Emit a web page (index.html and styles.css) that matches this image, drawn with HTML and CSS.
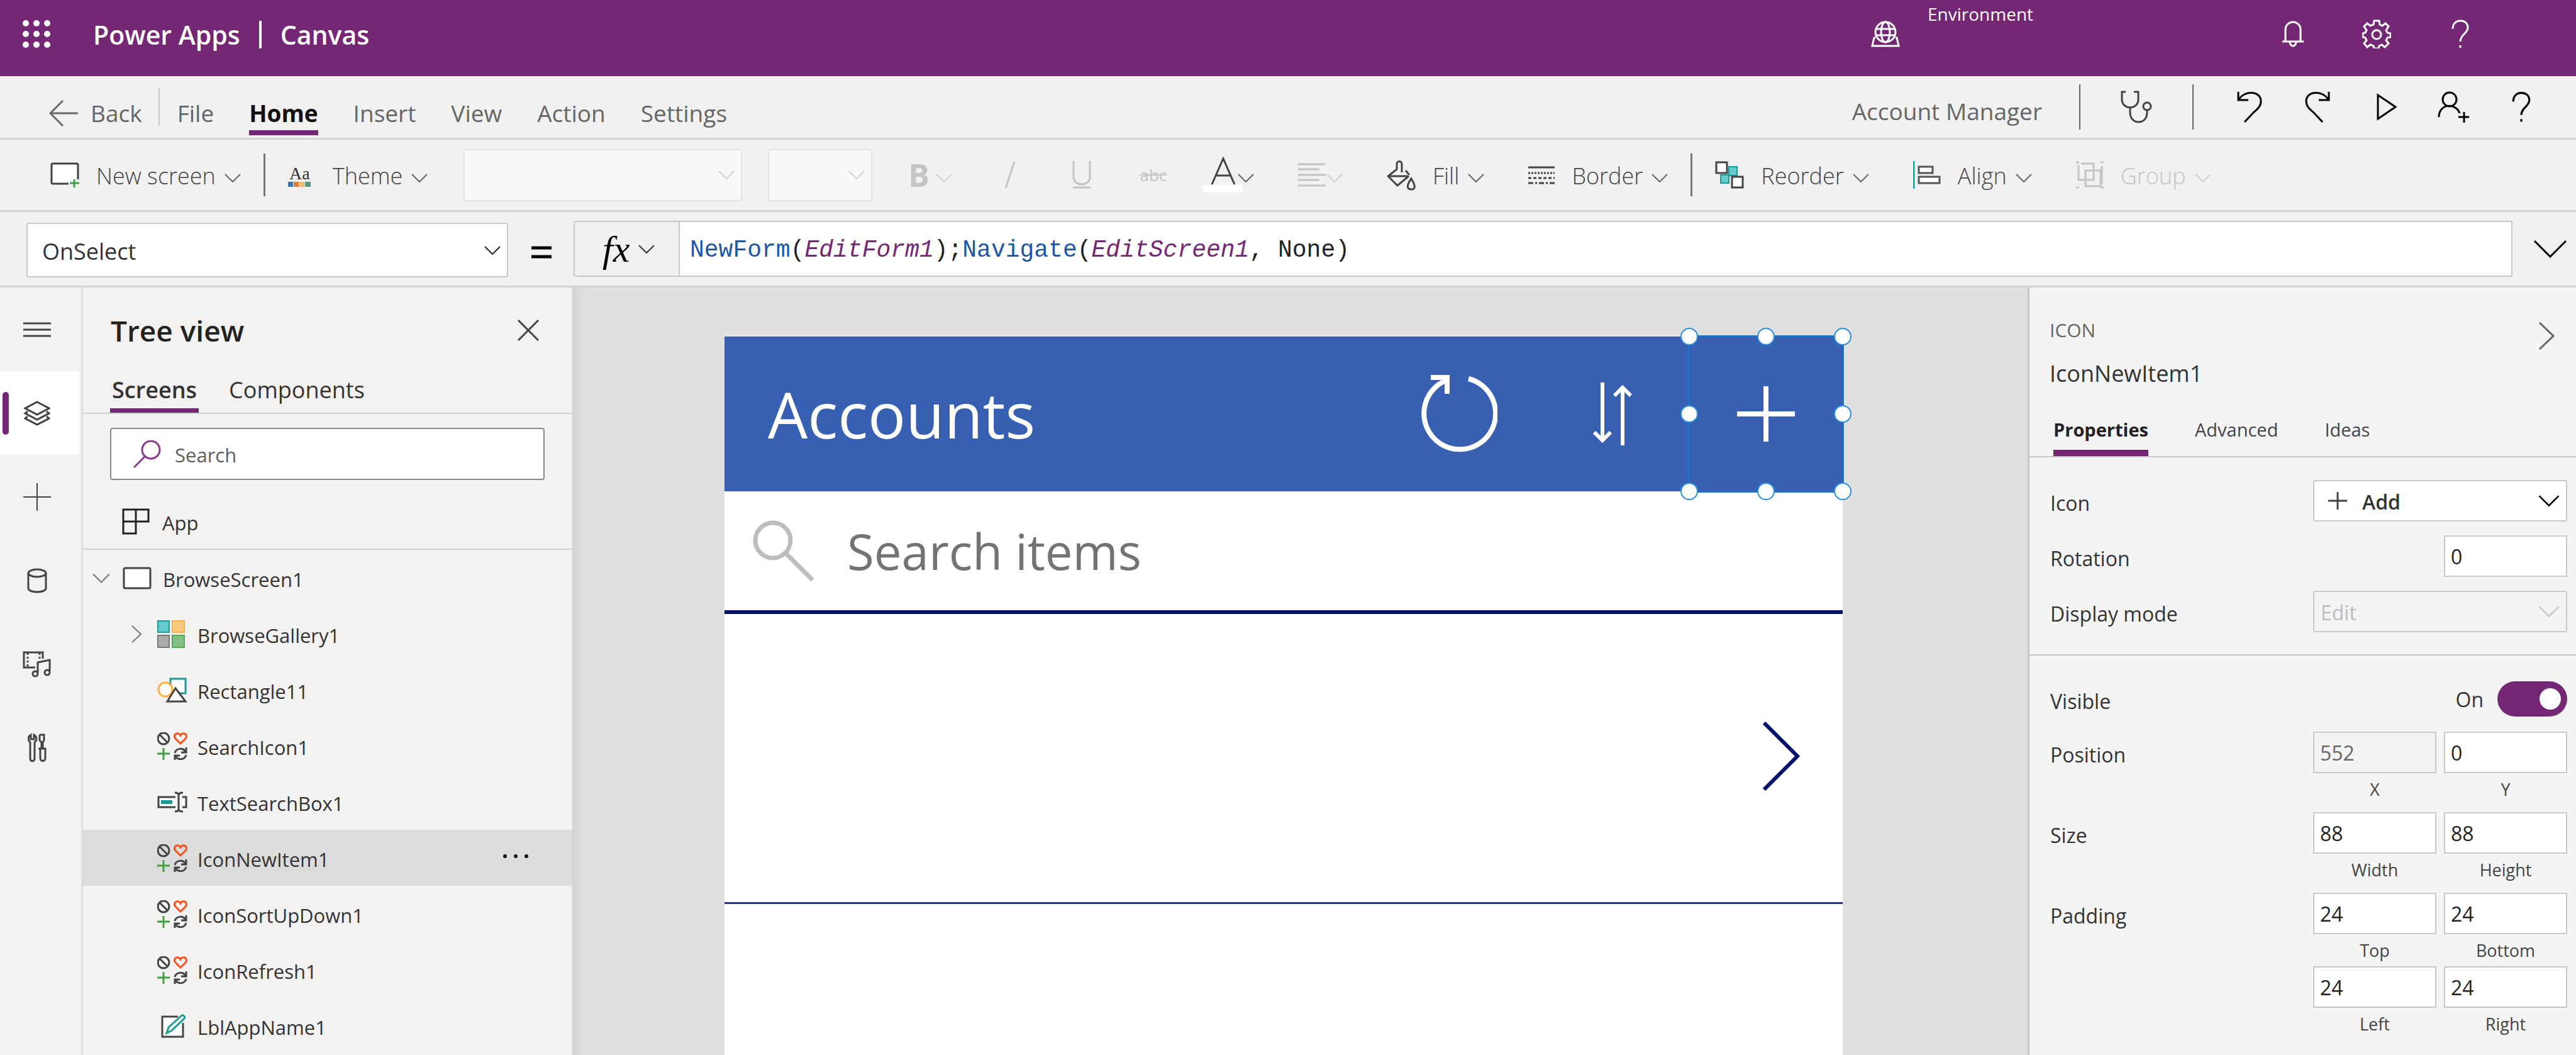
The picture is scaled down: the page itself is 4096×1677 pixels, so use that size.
FILE: index.html
```html
<!DOCTYPE html>
<html lang="en">
<head>
<meta charset="utf-8">
<title>Power Apps | Canvas</title>
<link rel="stylesheet" href="styles.css">
</head>
<body>
<svg class="symbols" aria-hidden="true">
  <symbol id="caret" viewBox="0 0 26 14"><path d="M1 1l12 12L25 1"/></symbol>
  <symbol id="help" viewBox="0 0 30 46"><path d="M3 15C3 7 8 2 15 2s12 4 12 11c0 9-12 11-12 22M15 41v4"/></symbol>
  <symbol id="icon-set" viewBox="0 0 48 44">
    <g fill="none" stroke-width="3">
      <path stroke="#444" d="M19 10a9 9 0 1 1-18 0a9 9 0 1 1 18 0M4 4l12 12"/>
      <path stroke="#f4511e" d="M37 18L29 10C24 4 33-2 37 5C41-2 50 4 45 10Z"/>
      <path stroke="#43a047" d="M10 25v19M0 34h20"/>
      <path stroke="#444" d="M28 33c2-8 13-9 17-2M46 24v8h-8M46 36c-2 8-13 9-17 2M28 44v-7h8"/>
    </g>
  </symbol>
</svg>
<div class="shell">
  <header class="topbar">
    <button class="plain" aria-label="App launcher">
      <svg width="44" height="44" viewBox="0 0 44 44" fill="#fff"><circle cx="5" cy="5" r="5"/><circle cx="22" cy="5" r="5"/><circle cx="39" cy="5" r="5"/><circle cx="5" cy="22" r="5"/><circle cx="22" cy="22" r="5"/><circle cx="39" cy="22" r="5"/><circle cx="5" cy="39" r="5"/><circle cx="22" cy="39" r="5"/><circle cx="39" cy="39" r="5"/></svg>
    </button>
    <div class="brand"><span>Power Apps</span><span class="brand-bar"></span><span>Canvas</span></div>
    <div class="environment">
      <svg width="46" height="42" viewBox="0 0 46 42" class="line white"><circle cx="23" cy="18" r="16"/><ellipse cx="23" cy="18" rx="7" ry="16"/><path d="M8 13h30M8 23h30M7 27H5L2 40h42l-3-13h-2"/></svg>
      <span class="environment-label">Environment</span>
    </div>
    <nav class="topbar-tools" aria-label="Account tools">
      <button class="plain" aria-label="Notifications"><svg width="36" height="42" viewBox="0 0 36 42" class="line white"><path d="M6 33V14a12 12 0 0 1 24 0v19M1 33h34M13 34a5 6 0 0 0 10 0"/></svg></button>
      <button class="plain" aria-label="Settings"><svg width="46" height="46" viewBox="0 0 46 46" class="line white"><path d="M19 2h8l1 6 4 2 5-4 5 5-4 6 2 4 5 1v6l-5 1-2 4 4 5-6 6-5-4-4 2-1 4h-7l-1-4-5-2-5 4-5-6 4-5-2-4-4-1v-6l4-1 2-4-4-6 5-5 5 4 5-2z"/><circle cx="23" cy="24" r="7"/></svg></button>
      <button class="plain" aria-label="Help"><svg width="30" height="46" class="line white"><use href="#help"/></svg></button>
    </nav>
  </header>

  <div class="menubar">
    <button class="plain back"><svg width="46" height="42" viewBox="0 0 46 42" class="line grey"><path d="M22 1L2 21l20 20M2 21h44"/></svg>Back</button>
    <span class="menu-rule"></span>
    <nav class="menu" aria-label="Menu">
      <button class="plain tab">File</button>
      <button class="plain tab current">Home</button>
      <button class="plain tab">Insert</button>
      <button class="plain tab">View</button>
      <button class="plain tab">Action</button>
      <button class="plain tab">Settings</button>
    </nav>
    <span class="app-name">Account Manager</span>
    <div class="menu-tools">
      <span class="tool-rule first"></span>
      <button class="plain" aria-label="App checker"><svg width="50" height="52" viewBox="0 0 50 52" class="line dark"><path d="M8 2H2v12c0 17 26 17 26 0V2h-7M15 27v8c0 20 27 20 27 0v-3"/><circle cx="42" cy="25" r="6"/></svg></button>
      <span class="tool-rule"></span>
      <button class="plain" aria-label="Undo"><svg width="40" height="50" viewBox="0 0 40 50" class="line black"><path d="M2 1v13h16M3 13C12-2 38-1 38 16c0 8-6 13-12 18L12 49"/></svg></button>
      <button class="plain" aria-label="Redo"><svg width="40" height="50" viewBox="0 0 40 50" class="line black"><path d="M38 1v13H22M37 13C28-2 2-1 2 16c0 8 6 13 12 18l14 15"/></svg></button>
      <button class="plain" aria-label="Preview"><svg width="36" height="44" viewBox="0 0 36 44" class="line black"><path d="M6 3v38l28-19z"/></svg></button>
      <button class="plain" aria-label="Share"><svg width="50" height="50" viewBox="0 0 50 50" class="line black"><circle cx="19" cy="13" r="11"/><path d="M2 41c0-22 27-23 33-6M42 33v17M33 41h17"/></svg></button>
      <button class="plain" aria-label="Help"><svg width="32" height="50" class="line black"><use href="#help"/></svg></button>
    </div>
  </div>

  <div class="ribbon">
    <button class="plain command"><svg width="46" height="40" viewBox="0 0 46 40" fill="none" stroke-width="3"><path stroke="#444" fill="#fff" d="M29 34H4a2 2 0 0 1-2-2V4a2 2 0 0 1 2-2h38a2 2 0 0 1 2 2v23"/><path stroke="#43a047" d="M38 27v13M31 33h15"/></svg><span>New screen</span><svg class="caret"><use href="#caret"/></svg></button>
    <span class="ribbon-rule"></span>
    <button class="plain command"><svg width="44" height="38" viewBox="0 0 44 38"><text x="2" y="26" class="theme-letters">Aa</text><path fill="#3d73b5" d="M0 30h8v8H0z"/><path fill="#e07c35" d="M9 30h8v8H9z"/><path fill="#f0bd6c" d="M18 30h8v8h-8z"/><path fill="#55977d" d="M27 30h9v8h-9z"/></svg><span>Theme</span><svg class="caret"><use href="#caret"/></svg></button>
    <div class="drop faded font-drop"><select disabled aria-label="Font"></select><svg class="caret"><use href="#caret"/></svg></div>
    <div class="drop faded size-drop"><select disabled aria-label="Font size"></select><svg class="caret"><use href="#caret"/></svg></div>
    <div class="command-group">
      <button class="plain glyph-command faint" disabled aria-label="Bold"><b>B</b><svg class="caret"><use href="#caret"/></svg></button>
      <button class="plain glyph faint" disabled aria-label="Italic"><svg width="18" height="44" viewBox="0 0 18 44" class="line faint"><path d="M16 1L2 43"/></svg></button>
      <button class="plain glyph faint" disabled aria-label="Underline"><svg width="30" height="44" viewBox="0 0 30 44" class="line faint"><path d="M2 0v25c0 16 26 16 26 0V0M1 42h28"/></svg></button>
      <button class="plain glyph faint strike" disabled>abc</button>
      <button class="plain color-command" aria-label="Font color"><svg width="62" height="58" viewBox="0 0 62 58" class="line dark"><path d="M14 44L32 3l18 41M20 30h24"/><path d="M0 45h62v12H0z" fill="#fff" stroke="none"/></svg><svg class="caret"><use href="#caret"/></svg></button>
      <button class="plain align-command" disabled aria-label="Text align"><svg width="44" height="38" viewBox="0 0 44 38" class="line faint"><path d="M0 2h44M0 10h34M0 19h44M0 27h34M0 36h44"/></svg><svg class="caret"><use href="#caret"/></svg></button>
      <button class="plain command"><svg width="46" height="56" viewBox="0 0 46 56" class="line dark"><path d="M24 24V11c0-6-8-6-8 0v8L2 30l15 15 18-15M30 21l6 7M2 30h32M39 34c-8 11-7 17 0 17s7-6 0-17z"/></svg><span>Fill</span><svg class="caret"><use href="#caret"/></svg></button>
      <button class="plain command"><svg width="42" height="30" viewBox="0 0 42 30" class="line dark"><path d="M0 3h42"/><path d="M0 12h42" stroke-dasharray="3 2"/><path d="M0 20h42" stroke-dasharray="5 3"/><path d="M0 28h42" stroke-dasharray="8 3 3 3"/></svg><span>Border</span><svg class="caret"><use href="#caret"/></svg></button>
    </div>
    <span class="ribbon-rule"></span>
    <div class="command-group">
      <button class="plain command"><svg width="46" height="44" viewBox="0 0 46 44"><path d="M22 9h13v14H22zM9 22h13v13H9z" fill="#66cccb" stroke="#1a9b99" stroke-width="2"/><path d="M2 2h17v17H2zM27 25h17v17H27z" fill="#fff" stroke="#444" stroke-width="3"/></svg><span>Reorder</span><svg class="caret"><use href="#caret"/></svg></button>
      <button class="plain command"><svg width="44" height="44" viewBox="0 0 44 44" fill="#fff"><path d="M1 0v44" stroke="#1a9b99" stroke-width="3"/><path d="M9 9h22v10H9zM9 25h33v10H9z" stroke="#555" stroke-width="3"/></svg><span>Align</span><svg class="caret"><use href="#caret"/></svg></button>
      <button class="plain command faint" disabled><svg width="44" height="44" viewBox="0 0 44 44" class="line faint"><path d="M8 4h20v26H4V6M15 15h24v25H15zM0 2h5M39 2h5M0 42h5M39 42h5M41 8v28"/></svg><span>Group</span><svg class="caret"><use href="#caret"/></svg></button>
    </div>
  </div>

  <div class="formula-bar">
    <div class="drop property-drop"><select aria-label="Property"><option>OnSelect</option></select><svg class="caret"><use href="#caret"/></svg></div>
    <svg class="equals" width="32" height="20" viewBox="0 0 32 20"><path d="M0 3h32M0 17h32" stroke="#000" stroke-width="5"/></svg>
    <button class="plain fx" aria-label="Functions"><i>fx</i><svg class="caret"><use href="#caret"/></svg></button>
    <div class="formula" role="textbox" contenteditable="true" spellcheck="false" aria-label="Formula"><span class="fn">NewForm</span>(<span class="ref">EditForm1</span>);<span class="fn">Navigate</span>(<span class="ref">EditScreen1</span>, None)</div>
    <button class="plain expand" aria-label="Expand formula bar"><svg width="52" height="28" viewBox="0 0 52 28" class="line black"><path d="M1 1l25 25L51 1"/></svg></button>
  </div>

  <main class="workspace">
    <nav class="rail" aria-label="Panels">
      <button class="plain rail-item" aria-label="Menu"><svg width="44" height="24" viewBox="0 0 44 24" class="line dark"><path d="M0 2h44M0 12h44M0 22h44"/></svg></button>
      <button class="plain rail-item active" aria-label="Tree view"><svg width="42" height="40" viewBox="0 0 42 40" class="line dark"><path d="M21 2l19 10-19 10L2 12zM6 17l-4 3 19 10 19-10-4-3M6 25l-4 3 19 10 19-10-4-3"/></svg></button>
      <button class="plain rail-item" aria-label="Insert"><svg width="44" height="44" viewBox="0 0 44 44" class="line dark thin"><path d="M22 0v44M0 22h44"/></svg></button>
      <button class="plain rail-item" aria-label="Data"><svg width="32" height="40" viewBox="0 0 32 40" class="line dark"><ellipse cx="16" cy="8" rx="14" ry="6"/><path d="M2 8v24c0 8 28 8 28 0V8"/></svg></button>
      <button class="plain rail-item" aria-label="Media"><svg width="46" height="42" viewBox="0 0 46 42" class="line dark"><path d="M32 12V2H2v24h18M24 34V18l19-4v18"/><path d="M8 3v22M27 3v12" stroke-dasharray="3 3"/><circle cx="20" cy="36" r="4"/><circle cx="39" cy="34" r="4"/></svg></button>
      <button class="plain rail-item" aria-label="Advanced tools"><svg width="30" height="46" viewBox="0 0 30 46" class="line dark"><path d="M5 2v7h5V2c5 3 5 9 1 12v26c0 5-7 5-7 0V14C0 11 0 5 5 2zM19 2h7v9l-2 3v10h4v15c0 6-8 6-8 0V24M17 24h11M22 24V14l-3-3V2"/></svg></button>
    </nav>

    <section class="tree-panel">
      <div class="tree-head"><h2>Tree view</h2><button class="plain" aria-label="Close"><svg width="34" height="34" viewBox="0 0 34 34" class="line dark"><path d="M1 1l32 32M33 1L1 33"/></svg></button></div>
      <div class="tree-tabs"><button class="plain current">Screens</button><button class="plain">Components</button></div>
      <label class="tree-search"><svg width="44" height="44" viewBox="0 0 44 44" class="line violet"><circle cx="28" cy="15" r="14"/><path d="M18 26L1 43"/></svg><input type="search" placeholder="Search" aria-label="Search"></label>
      <button class="plain app-row"><svg width="44" height="42" viewBox="0 0 44 42" class="line ink"><path d="M2 2h40v19H2zM2 2h20v38H2z"/></svg><span>App</span></button>
      <ul class="tree">
        <li><button class="plain node"><svg class="twist"><use href="#caret"/></svg><span class="node-icon"><svg width="46" height="36" viewBox="0 0 46 36"><rect x="2" y="2" width="42" height="32" rx="2" fill="#fff" stroke="#444" stroke-width="3"/></svg></span><span class="name">BrowseScreen1</span></button>
          <ul>
            <li><button class="plain node"><svg class="twist" viewBox="0 0 28 28"><path d="M8 1l14 13L8 27"/></svg><span class="node-icon"><svg width="44" height="44" viewBox="0 0 44 44" stroke-width="2"><path d="M1 1h18v18H1z" fill="#66cccb" stroke="#1a9b99"/><path d="M24 1h19v18H24z" fill="#fccb80" stroke="#fbb03b"/><path d="M1 24h18v19H1z" fill="#aaa" stroke="#777"/><path d="M24 24h19v19H24z" fill="#83c088" stroke="#4caf50"/></svg></span><span class="name">BrowseGallery1</span></button></li>
            <li><button class="plain node"><span class="twist"></span><span class="node-icon"><svg width="48" height="40" viewBox="0 0 48 40" fill="#fff" stroke-width="3"><path d="M21 2h24v23H21z" stroke="#1a9b99"/><circle cx="13" cy="19" r="11" stroke="#fbb03b"/><path d="M29 17L16 38h29z" stroke="#444"/></svg></span><span class="name">Rectangle11</span></button></li>
            <li><button class="plain node"><span class="twist"></span><span class="node-icon"><svg width="48" height="44"><use href="#icon-set"/></svg></span><span class="name">SearchIcon1</span></button></li>
            <li><button class="plain node"><span class="twist"></span><span class="node-icon"><svg width="48" height="34" viewBox="0 0 48 34" class="line dark"><path fill="#fff" d="M29 9H2v16h27M40 9h6v16h-6"/><path d="M28 2c4 0 6 1 6 4v22c0 3-2 4-6 4M41 2c-4 0-7 1-7 4v22c0 3 3 4 7 4"/><path d="M6 14h18v6H6z" fill="#1a9b99" stroke="none"/></svg></span><span class="name">TextSearchBox1</span></button></li>
            <li><button class="plain node selected"><span class="twist"></span><span class="node-icon"><svg width="48" height="44"><use href="#icon-set"/></svg></span><span class="name">IconNewItem1</span><svg class="more" width="42" height="8" viewBox="0 0 42 8"><circle cx="4" cy="4" r="3"/><circle cx="21" cy="4" r="3"/><circle cx="38" cy="4" r="3"/></svg></button></li>
            <li><button class="plain node"><span class="twist"></span><span class="node-icon"><svg width="48" height="44"><use href="#icon-set"/></svg></span><span class="name">IconSortUpDown1</span></button></li>
            <li><button class="plain node"><span class="twist"></span><span class="node-icon"><svg width="48" height="44"><use href="#icon-set"/></svg></span><span class="name">IconRefresh1</span></button></li>
            <li><button class="plain node"><span class="twist"></span><span class="node-icon"><svg width="48" height="38" viewBox="0 0 48 38" stroke-width="3"><path d="M33 4H8v32h33V14" fill="#fff" stroke="#444"/><path d="M15 30l3-9L38 3c3-3 7 1 5 4L23 26z" fill="#fff" stroke="#1a9b99"/></svg></span><span class="name">LblAppName1</span></button></li>
          </ul>
        </li>
      </ul>
    </section>

    <section class="canvas">
      <div class="phone">
        <div class="phone-head">
          <h1>Accounts</h1>
          <button class="plain tile" aria-label="Refresh"><svg width="122" height="124" viewBox="0 0 122 124" fill="none" stroke="#fff" stroke-width="8"><path d="M76 6A57 57 0 1 1 42 8M16 4h26v26"/></svg></button>
          <button class="plain tile" aria-label="Sort"><svg width="62" height="100" viewBox="0 0 62 100" fill="none" stroke="#fff" stroke-width="6"><path d="M15 0v92M2 79l13 13 13-13M47 100V8M34 21L47 8l13 13"/></svg></button>
          <button class="plain tile picked" aria-label="New item"><svg width="92" height="88" viewBox="0 0 92 88" stroke="#fff" stroke-width="8"><path d="M46 0v88M0 44h92"/></svg>
            <span class="handle nw"></span><span class="handle n"></span><span class="handle ne"></span><span class="handle w"></span><span class="handle e"></span><span class="handle sw"></span><span class="handle s"></span><span class="handle se"></span>
          </button>
        </div>
        <label class="phone-search"><svg width="98" height="98" viewBox="0 0 98 98" fill="none" stroke="#bdbdbd" stroke-width="7"><circle cx="32" cy="32" r="28"/><path d="M52 52l43 43"/></svg><input type="text" placeholder="Search items" aria-label="Search items"></label>
        <div class="phone-item"><button class="plain" aria-label="Open record"><svg width="60" height="110" viewBox="0 0 60 110" fill="none" stroke="#000f69" stroke-width="6"><path d="M2 2l53 53-53 53"/></svg></button></div>
      </div>
    </section>

    <aside class="properties">
      <div class="prop-head">
        <div><p class="kind">ICON</p><p class="control-name">IconNewItem1</p></div>
        <button class="plain" aria-label="Collapse"><svg width="26" height="44" viewBox="0 0 26 44" class="line grey"><path d="M2 1l22 21L2 43"/></svg></button>
      </div>
      <div class="prop-tabs"><button class="plain current">Properties</button><button class="plain">Advanced</button><button class="plain">Ideas</button></div>
      <div class="prop-section">
        <div class="prop"><label for="icon">Icon</label><div class="drop wide strong"><svg class="lead line dark" viewBox="0 0 30 28"><path d="M15 0v28M0 14h30"/></svg><select id="icon"><option>Add</option></select><svg class="caret"><use href="#caret"/></svg></div></div>
        <div class="prop"><label for="rotation">Rotation</label><input class="last" id="rotation" value="0"></div>
        <div class="prop"><label for="mode">Display mode</label><div class="drop wide off"><select id="mode" disabled><option>Edit</option></select><svg class="caret"><use href="#caret"/></svg></div></div>
      </div>
      <div class="prop-section more-props">
        <div class="prop"><label for="visible">Visible</label><div class="wide switch"><span>On</span><input id="visible" type="checkbox" checked></div></div>
        <div class="prop"><span class="group-label">Position</span>
          <label class="field"><input value="552" disabled>X</label><label class="field"><input value="0">Y</label></div>
        <div class="prop"><span class="group-label">Size</span>
          <label class="field"><input value="88">Width</label><label class="field"><input value="88">Height</label></div>
        <div class="prop"><span class="group-label">Padding</span>
          <label class="field"><input value="24">Top</label><label class="field"><input value="24">Bottom</label>
          <label class="field second"><input value="24">Left</label><label class="field"><input value="24">Right</label></div>
      </div>
    </aside>
  </main>
</div>
</body>
</html>
```

FILE: styles.css
```css
* { box-sizing: border-box; }
body { margin: 0; font-family: "Open Sans", "Noto Sans", sans-serif; font-size: 32px; color: #333; background: #f1f1f1; }
h1, h2, p, ul { margin: 0; padding: 0; list-style: none; }
svg { display: block; flex: none; }
.symbols { display: none; }
input, select { font: inherit; color: inherit; border: 0; border-radius: 0; margin: 0; min-width: 0; outline: 0; }
.plain { font: inherit; color: inherit; background: none; border: 0; padding: 0; margin: 0; text-align: left; white-space: nowrap; }

.line { fill: none; stroke-width: 3; }
.thin { stroke-width: 2; }
.white { stroke: #fff; }
.grey { stroke: #666; }
.dark { stroke: #444; }
.ink { stroke: #222; }
.black { stroke: #000; }
.violet { stroke: #8a3a8c; }
.line.faint { stroke: #c4c4c4; }
.caret { width: 26px; height: 14px; fill: none; stroke: #666; stroke-width: 2; }

.shell { display: flex; flex-direction: column; min-height: 100vh; }

/* Title bar */
.topbar { display: flex; align-items: center; height: 121px; padding: 0 159px 14px 36px; background: #742774; color: #fff; }
.brand { display: flex; align-items: center; gap: 30px; margin-left: 68px; padding-top: 3px; font-size: 41px; font-weight: 600; white-space: nowrap; }
.brand-bar { width: 4px; height: 44px; background: #fff; }
.environment { display: flex; align-items: center; align-self: stretch; gap: 44px; margin-left: auto; }
.environment-label { align-self: flex-start; width: 473px; line-height: 44px; font-size: 28px; }
.topbar-tools { display: flex; gap: 83px; margin-left: 83px; }
.topbar-tools .plain { display: flex; justify-content: center; align-items: center; width: 50px; }

/* Menu row */
.menubar { display: flex; align-items: center; height: 101px; padding: 0 62px 0 78px; border-bottom: 3px solid #d4d4d4; font-size: 37px; color: #666; }
.back { display: flex; align-items: center; gap: 20px; padding-top: 19px; }
.menu-rule { width: 2px; height: 60px; margin: 0 28px 0 26px; background: #c8c8c8; }
.menu { display: flex; align-self: stretch; gap: 56px; }
.tab { margin: 0 0 4px; padding: 31px 0 0; border-bottom: 8px solid transparent; }
.tab.current { font-weight: 700; color: #111; border-color: #742774; }
.app-name { margin-left: auto; padding-top: 12px; white-space: nowrap; }
.menu-tools { display: flex; align-items: center; gap: 58px; margin-left: 59px; }
.menu-tools .plain { display: flex; justify-content: center; width: 50px; }
.tool-rule { width: 2px; height: 72px; margin: 0 6px; background: #666; }
.tool-rule.first { margin-left: 0; }

/* Ribbon */
.ribbon { display: flex; align-items: center; height: 115px; padding-left: 80px; border-bottom: 3px solid #d4d4d4; font-size: 36px; font-weight: 300; color: #444; }
.command { display: flex; align-items: center; gap: 27px; }
.command span { padding-top: 3px; }
.command .caret { margin: 10px 0 0 -13px; }
.command-group { display: flex; align-items: center; gap: 70px; }
.ribbon-rule { width: 3px; height: 68px; margin: 0 36px; background: #777; }
.theme-letters { font: 28px "Liberation Serif", serif; fill: #333; }
.faint { color: #c4c4c4; }
.faint .caret, .align-command .caret, .faded .caret { stroke: #cfcfcf; }
.glyph-command { display: flex; align-items: center; gap: 10px; font-size: 50px; line-height: 60px; }
.glyph-command b { font-weight: 700; }
.glyph-command .caret { margin-top: 10px; }
.glyph { display: flex; justify-content: center; width: 44px; font-size: 26px; }
.strike { text-decoration: line-through; font-weight: 400; }
.color-command { display: flex; align-items: center; margin-left: -13px; }
.color-command .caret { margin: 10px 0 0 -7px; }
.align-command { display: flex; align-items: center; gap: 1px; }
.align-command .caret { margin-top: 10px; }

.drop { display: grid; align-items: center; position: relative; height: 66px; background: #fff; border: 2px solid #c8c8c8; border-radius: 4px; }
.drop select { grid-area: 1 / 1; width: 100%; height: 100%; appearance: none; background: none; padding: 2px 60px 0 10px; opacity: 1; }
.drop > .caret { grid-area: 1 / 1; justify-self: end; margin-right: 10px; pointer-events: none; }
.faded { height: 83px; background: #f8f8f8; border-color: #e3e3e3; }
.font-drop { width: 443px; margin-left: 57px; }
.size-drop { width: 166px; margin: 0 57px 0 41px; }

/* Formula bar */
.formula-bar { display: flex; align-items: center; height: 120px; padding: 0 15px 0 42px; border-bottom: 3px solid #d4d4d4; }
.property-drop { width: 766px; height: 87px; margin-top: 4px; font-size: 36px; }
.property-drop select { padding: 4px 60px 0 23px; }
.property-drop > .caret { stroke: #222; }
.equals { margin: 11px 35px 0 37px; }
.fx { display: flex; align-items: center; gap: 14px; width: 167px; height: 89px; padding-left: 44px; border: 2px solid #c8c8c8; border-right: 0; border-radius: 4px 0 0 4px; color: #000; }
.fx i { font: italic 60px/80px "Liberation Serif", serif; }
.fx .caret { stroke: #333; }
.formula { flex: 1; height: 89px; padding: 0 16px; border: 2px solid #c8c8c8; background: #fff; font: 38px/90px "Liberation Mono", monospace; color: #222; white-space: nowrap; overflow: hidden; }
.fn { color: #2056a5; }
.ref { color: #742774; font-style: italic; }
.expand { margin-left: 34px; }

/* Workspace */
.workspace { flex: 1; display: flex; background: #e0e0e0; }
.rail { width: 132px; background: #f3f2f1; border-right: 3px solid #dedede; }
.rail-item { display: flex; justify-content: center; align-items: center; position: relative; width: 126px; height: 133px; padding-right: 8px; }
.rail-item.active { background: #fff; border-radius: 0 6px 6px 0; }
.rail-item.active::before { content: ""; position: absolute; left: 4px; top: 33px; width: 10px; height: 68px; border-radius: 5px; background: #742774; }

.tree-panel { width: 778px; background: #f3f2f1; font-size: 31px; }
.tree-head { display: flex; align-items: center; justify-content: space-between; padding: 38px 53px 0 44px; }
.tree-head h2 { font-size: 46px; line-height: 60px; font-weight: 600; color: #222; }
.tree-tabs { display: flex; gap: 45px; margin-top: 41px; padding-left: 43px; border-bottom: 2px solid #d0d0d0; font-size: 36px; line-height: 48px; }
.tree-tabs .plain { padding: 0 3px 5px; border-bottom: 7px solid transparent; }
.tree-tabs .current { font-weight: 600; border-color: #742774; }
.tree-search { display: flex; align-items: center; gap: 20px; height: 83px; margin: 22px 44px 0 43px; padding-left: 35px; background: #fff; border: 2px solid #8a8886; border-radius: 4px; }
.tree-search input { flex: 1; padding-top: 3px; background: none; }
.tree-search input::placeholder { color: #605e5c; opacity: 1; }
.app-row { display: flex; align-items: center; gap: 20px; width: 100%; height: 89px; margin-top: 22px; padding-left: 62px; border-bottom: 2px solid #d0d0d0; }
.app-row span, .name { padding-top: 5px; }
.node { display: flex; align-items: center; width: 100%; height: 89px; padding-left: 15px; }
.tree ul .node { padding-left: 70px; }
.twist { width: 28px; height: 28px; margin-right: 20px; fill: none; stroke: #777; stroke-width: 2; }
.node-icon { width: 48px; margin-right: 16px; }
.selected { background: #dcdcdc; }
.more { margin: 0 69px 6px auto; fill: #111; }

/* Design canvas */
.canvas { flex: 1; display: flex; padding: 78px 294px 0 242px; box-shadow: inset 20px 0 24px -20px #0000001f; }
.phone { flex: 1; display: flex; flex-direction: column; background: #fff; }
.phone-head { display: flex; height: 246px; padding-left: 69px; background: #3860b2; color: #fff; }
.phone-head h1 { flex: 1; align-self: center; font-size: 100px; line-height: 120px; font-weight: 400; }
.tile { display: flex; justify-content: center; align-items: center; width: 244px; }
.picked { position: relative; outline: 2px solid #0f78d4; }
.handle { position: absolute; width: 28px; height: 28px; margin: -14px; border: 2px solid #2b8ede; border-radius: 50%; background: #fff; }
.nw, .n, .ne { top: 0; }
.w, .e { top: 50%; }
.sw, .s, .se { top: 100%; }
.nw, .w, .sw { left: 0; }
.n, .s { left: 50%; }
.ne, .e, .se { left: 100%; }
.phone-search { display: flex; align-items: center; gap: 50px; height: 195px; padding-left: 45px; border-bottom: 6px solid #000f69; }
.phone-search input { flex: 1; font-size: 78px; background: none; }
.phone-search input::placeholder { color: #737373; opacity: 1; }
.phone-item { display: flex; align-items: center; justify-content: flex-end; height: 461px; padding: 0 67px 6px 0; border-bottom: 3px solid #2b3680; }

/* Properties panel */
.properties { width: 872px; background: #f4f4f4; border-left: 3px solid #c8c8c8; }
.prop-head { display: flex; justify-content: space-between; align-items: flex-start; padding: 46px 34px 0 32px; }
.prop-head .plain { margin-top: 9px; }
.kind { font-size: 30px; line-height: 44px; color: #666; }
.control-name { margin-top: 22px; font-size: 36px; line-height: 50px; }
.prop-tabs { display: flex; gap: 74px; margin-top: 42px; padding-left: 38px; border-bottom: 2px solid #c8c8c8; font-size: 29px; line-height: 44px; color: #444; }
.prop-tabs .plain { padding-bottom: 10px; border-bottom: 10px solid transparent; }
.prop-tabs .current { font-weight: 700; color: #222; border-color: #742774; }
.prop-section { display: grid; gap: 22px; padding: 36px 14px 35px 33px; border-bottom: 2px solid #c8c8c8; }
.more-props { gap: 19px; border: 0; }
.prop { display: grid; grid-template-columns: 1fr 196px 196px; column-gap: 12px; row-gap: 8px; align-items: start; }
.prop > label:first-child, .group-label { line-height: 66px; padding-top: 4px; margin-bottom: -4px; }
.wide { grid-column: 2 / 4; }
.last { grid-column: 3; }
.second { grid-column: 2; }
.prop input:not([type="checkbox"]) { width: 100%; height: 66px; padding: 0 9px; border: 2px solid #c8c8c8; background: #fff; font-size: 32px; color: #222; }
.prop input:disabled:not([type="checkbox"]) { background: #f4f4f4; color: #666; }
.field { display: grid; gap: 9px; justify-items: center; font-size: 27px; line-height: 34px; color: #444; }
.strong { font-weight: 600; }
.strong select { padding-left: 76px; }
.lead { grid-area: 1 / 1; width: 30px; height: 28px; margin-left: 22px; }
.prop .caret { width: 34px; height: 18px; }
.strong .caret { stroke: #000; }
.off { background: #f4f4f4; color: #bcbcbc; }
.off .caret { stroke: #c8c8c8; }
.switch { display: flex; justify-content: flex-end; align-items: center; gap: 22px; height: 66px; }
.switch input { appearance: none; display: flex; align-items: center; justify-content: flex-end; width: 111px; height: 56px; padding-right: 10px; border-radius: 28px; background: #742774; }
.switch input::after { content: ""; width: 34px; height: 34px; border-radius: 50%; background: #fff; }
```
